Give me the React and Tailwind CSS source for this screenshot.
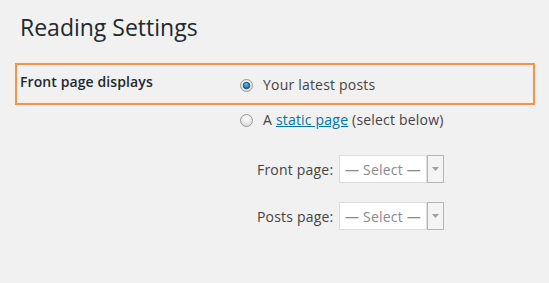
const Radio = ({ checked }) => (
  <svg width="13" height="13" viewBox="0 0 13 13" className="shrink-0">
    <defs>
      <radialGradient id={checked ? 'rg1' : 'rg2'} cx="50%" cy="35%" r="65%">
        <stop offset="0%" stopColor="#ffffff" />
        <stop offset="100%" stopColor="#d9d9d9" />
      </radialGradient>
      <radialGradient id="dot" cx="45%" cy="35%" r="60%">
        <stop offset="0%" stopColor="#5fc0f0" />
        <stop offset="100%" stopColor="#0a63a8" />
      </radialGradient>
    </defs>
    <circle cx="6.5" cy="6.5" r="6" fill={`url(#${checked ? 'rg1' : 'rg2'})`} stroke="#9a9a9a" strokeWidth="1" />
    {checked && <circle cx="6.5" cy="6.5" r="3.3" fill="url(#dot)" stroke="#1d3f5e" strokeWidth="0.8" />}
  </svg>
);

const SelectBox = () => (
  <div className="flex h-[28px]">
    <div className="flex w-[88px] items-center whitespace-nowrap border border-[#dcdcdc] bg-white pl-[5px] text-[14px] tracking-[0.2px] text-[#8a8a8a]">
      — Select —
    </div>
    <div className="flex w-[17px] items-center justify-center border border-[#b5b5b5] bg-[#f4f4f4]">
      <svg width="7" height="4" viewBox="0 0 7 4">
        <path d="M0 0 L7 0 L3.5 4 Z" fill="#a0a0a0" />
      </svg>
    </div>
  </div>
);

export default function App() {
  return (
    <div className="min-h-screen bg-[#f1f1f1] font-['Open_Sans',sans-serif] text-[14px] tracking-[0.2px] text-[#444]">
      <div className="pl-5 pt-[13px]">
        <h1 className="text-[23px] leading-[29px] tracking-normal text-[#23282d]">Reading Settings</h1>
      </div>

      <div className="ml-[15px] mt-[21px] flex h-[42px] w-[520px] border-2 border-[#f4944a]">
        <div className="w-[223px] whitespace-nowrap pl-[3px] pt-[7px] font-semibold leading-5 tracking-[0.1px] text-[#23282d]">Front page displays</div>
        <div className="flex items-start gap-[10px] whitespace-nowrap pt-[10px] leading-5">
          <div className="pt-[4px]"><Radio checked /></div>
          <span>Your latest posts</span>
        </div>
      </div>

      <div className="ml-[240px] mt-[5px] flex items-start gap-[10px] whitespace-nowrap leading-5">
        <div className="pt-[4px]"><Radio /></div>
        <span>
          A <a href="#" className="text-[#0073aa] underline">static page</a> (select below)
        </span>
      </div>

      <div className="ml-[257px] mt-[25px] flex flex-col gap-[19px]">
        <div className="flex items-center gap-[6px]">
          <span className="w-[76px] whitespace-nowrap">Front page:</span>
          <SelectBox />
        </div>
        <div className="flex items-center gap-[6px]">
          <span className="w-[76px] whitespace-nowrap">Posts page:</span>
          <SelectBox />
        </div>
      </div>
    </div>
  );
}
